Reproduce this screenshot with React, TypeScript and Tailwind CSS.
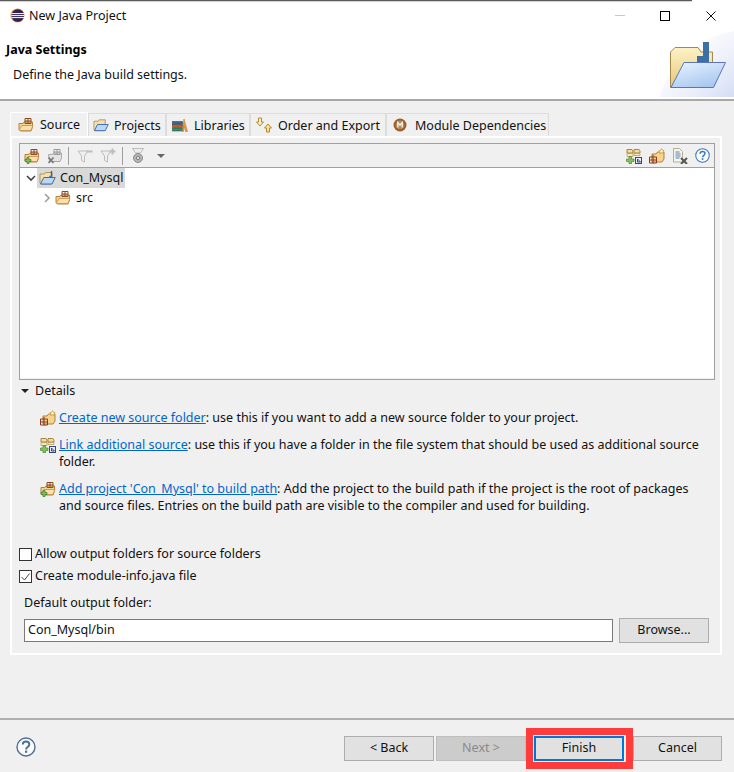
import type { ReactNode } from "react";

const FONT = "font-['Noto_Sans','Noto_Sans_CJK_SC',sans-serif]";

function EclipseLogo() {
  return (
    <svg width="15" height="15" viewBox="0 0 15 15">
      <circle cx="7.5" cy="7.5" r="7" fill="#f7941e" />
      <circle cx="7.8" cy="7.5" r="6.3" fill="#2c2255" />
      <path d="M1.5 5.6h12.6M1.2 7.6h13.2M1.6 9.6h12.4" stroke="#fff" strokeWidth="1" />
    </svg>
  );
}

function PackageFolder({ badge }: { badge?: ReactNode }) {
  return (
    <svg width="16" height="16" viewBox="0 0 16 16">
      <path d="M1 6.5h4l1-1.5h8.5v5L13 14H2.5L1 12.5z" fill="#f6d38e" stroke="#b5803a" strokeWidth="1" />
      <path d="M1.2 13L4 8.5h11L12.8 13.5H2z" fill="#f9e0ac" stroke="#c08f4a" strokeWidth="0.8" />
      <path d="M7 1.5h6v5H7zM10 1.500v5M7 4h6" fill="none" stroke="#8a4b23" strokeWidth="1" />
      {badge}
    </svg>
  );
}

function PlusBadge() {
  return <path d="M3 9.5h2v2h2v2H5v2H3v-2H1v-2h2z" fill="#7fc25b" stroke="#3d7a2b" strokeWidth="0.7" />;
}

function RemoveSourceIcon() {
  return (
    <svg width="16" height="16" viewBox="0 0 16 16">
      <path d="M1.5 6.5h4l1-1.5h8v5L13 13.5H2.5z" fill="#e4e4e4" stroke="#a8a8a8" strokeWidth="1" />
      <path d="M7 1.5h6v5H7zM10 1.500v5M7 4h6" fill="none" stroke="#9a9a9a" strokeWidth="1" />
      <path d="M1.5 9.5l5 5.5M6.5 9.5l-5 5.5" stroke="#7a7a7a" strokeWidth="1.8" />
    </svg>
  );
}

function FilterIcon({ plus }: { plus?: boolean }) {
  return (
    <svg width="16" height="16" viewBox="0 0 16 16">
      <path d="M1 3h10L7.5 8v6l-3-1.500V8z" fill="#efefef" stroke="#bdbdbd" strokeWidth="1" />
      {plus ? (
        <path d="M12.5 0.5v6M9.5 3.5h6" stroke="#bdbdbd" strokeWidth="2" />
      ) : (
        <path d="M9.5 3.5h6" stroke="#bdbdbd" strokeWidth="2" />
      )}
    </svg>
  );
}

function ViewFilterIcon() {
  return (
    <svg width="16" height="17" viewBox="0 0 16 17">
      <path d="M1.5 1.500h11L9.5 6H4.500z" fill="#ededed" stroke="#bcbcbd" strokeWidth="1" />
      <circle cx="7" cy="11" r="4.5" fill="#b4b4b4" stroke="#8c8c8c" strokeWidth="1" />
      <circle cx="7" cy="11" r="1.6" fill="#efefef" stroke="#7c7c7c" strokeWidth="1" />
    </svg>
  );
}

function LinkSourceIcon() {
  return (
    <svg width="16" height="16" viewBox="0 0 16 16">
      <path d="M1 1.500h5l1 1.500v2H1zM8 1.500h5l1 1.500v2H8z" fill="#f3dca4" stroke="#a8853e" strokeWidth="1" />
      <path d="M1 5.500h6v3H1zM8 5.500h6v2H8z" fill="#f8e8c0" stroke="#a8853e" strokeWidth="0.6" />
      <path d="M3 8.500h2.500v2.500H8v2.500H5.500V16H3v-2.500H.5V11H3z" fill="#83c25c" stroke="#3f7c2d" strokeWidth="0.6" />
      <rect x="9.5" y="9.5" width="6" height="6" fill="#e9edf5" stroke="#33497a" />
      <path d="M11.5 11v3h3M11.5 11l3 3" stroke="#33497a" strokeWidth="1" fill="none" />
    </svg>
  );
}

function NewFolderIcon() {
  return (
    <svg width="16" height="16" viewBox="0 0 16 16">
      <path d="M3 6h4l1.500-2H15v7l-2 3H3z" fill="#f6d38e" stroke="#b5803a" strokeWidth="1" />
      <path d="M12.500 0.500l.8 1.800 1.900.3-1.400 1.300.4 1.900-1.700-1-1.700 1 .4-1.900-1.400-1.300 1.900-.3z" fill="#fff4c4" stroke="#c49a45" strokeWidth="0.7" />
      <path d="M.5 9h7v6h-7zM4 7v8.500M.5 12h7" fill="none" stroke="#8a3b1f" strokeWidth="1" />
    </svg>
  );
}

function RemoveEntryIcon() {
  return (
    <svg width="16" height="16" viewBox="0 0 16 16">
      <path d="M1.500.5h6l3 3V14h-9z" fill="#f4f4ee" stroke="#b4ae90" />
      <path d="M3.500 4h4M3.500 6h5M3.500 8h5M3.500 10h4" stroke="#5c7fb5" />
      <path d="M9 10l6 6M15 10l-6 6" stroke="#565656" strokeWidth="2" />
    </svg>
  );
}

function HelpIcon({ size, color }: { size: number; color: string }) {
  return (
    <svg width={size} height={size} viewBox="0 0 20 20">
      <circle cx="10" cy="10" r="9" fill="#fbfbfb" stroke={color} strokeWidth="1.4" />
      <path d="M6.800 7.600C6.800 5.600 8.300 4.600 10 4.600c1.900 0 3.300 1.100 3.300 2.800 0 2.600-3.200 2.500-3.200 5" fill="none" stroke={color} strokeWidth="2" />
      <rect x="9" y="13.600" width="2.200" height="2.200" fill={color} />
    </svg>
  );
}

function OpenFolderIcon({ jar }: { jar?: boolean }) {
  return (
    <svg width="17" height="16" viewBox="0 0 17 16">
      <path d="M1 4h4.500l1-1.500H13V12l-1 2H2L1 13z" fill="#f7e0a8" stroke="#a58e58" strokeWidth="0.9" />
      <path d="M1.500 14L4.800 7.500h11.400L13 14z" fill="#bcd7f4" stroke="#3e68b0" strokeWidth="1" />
      {jar && <path d="M12.500 1v5l-2 1" fill="none" stroke="#2c6aa8" strokeWidth="1.4" />}
    </svg>
  );
}

function LibrariesIcon() {
  return (
    <svg width="16" height="16" viewBox="0 0 16 16">
      <rect x="0.5" y="11" width="10" height="3" fill="#3f8a6e" stroke="#2b5d4d" strokeWidth="0.6" />
      <rect x="0.5" y="7.5" width="10" height="3" fill="#c45a2c" stroke="#7d3a1d" strokeWidth="0.6" />
      <rect x="0.5" y="4.5" width="10" height="2.6" fill="#2e6d96" stroke="#224f6d" strokeWidth="0.6" />
      <path d="M10.500 14.500L12 2l3.500 12.500h-2L12 8.500l-.5 6z" fill="#eba041" stroke="#b06f22" strokeWidth="0.5" />
    </svg>
  );
}

function OrderIcon() {
  return (
    <svg width="16" height="16" viewBox="0 0 16 16">
      <path d="M2.500 1h3v4H7.500L4 9 .5 5h2z" fill="#fbefc0" stroke="#b28a32" strokeWidth="1" />
      <path d="M10.500 15h3v-4h2L12 7l-3.500 4h2z" fill="#fbe08e" stroke="#b28a32" strokeWidth="1" />
    </svg>
  );
}

function ModuleIcon() {
  return (
    <svg width="14" height="14" viewBox="0 0 14 14">
      <circle cx="7" cy="7" r="6.5" fill="#9a5f2c" />
      <circle cx="7" cy="7" r="4.4" fill="#b98a5c" />
      <path d="M4.800 9.500v-5l2.200 2.600 2.200-2.600v5" fill="none" stroke="#fff" strokeWidth="1.2" />
    </svg>
  );
}

// Wizard banner picture in the top right of the header
function BannerFolder() {
  return (
    <svg width="74" height="68" viewBox="0 0 74 68" className="block">
      <defs>
        <linearGradient id="sheet" x1="0" y1="0" x2="1" y2="1">
          <stop offset="0" stopColor="#fff" stopOpacity="0" />
          <stop offset="1" stopColor="#d3dcf5" />
        </linearGradient>
        <linearGradient id="manila" x1="0" y1="0" x2="0" y2="1">
          <stop offset="0" stopColor="#fdf2c6" />
          <stop offset="1" stopColor="#e6c778" />
        </linearGradient>
        <linearGradient id="front" x1="0" y1="0" x2="0.6" y2="1">
          <stop offset="0" stopColor="#eaf4ff" />
          <stop offset="1" stopColor="#a9c8f0" />
        </linearGradient>
      </defs>
      <path d="M0 68C8 34 40 8 74 2V68z" fill="url(#sheet)" />
      <path d="M10.500 23L15 18.500H38L41 23H52.500V58.500H10.500z" fill="url(#manila)" stroke="#a4894e" />
      <path d="M43 13h6v20H37v-6h6z" fill="#3c6fa6" />
      <path d="M11 58.500L24 33.500H65.500L53.500 58.500z" fill="url(#front)" stroke="#5c74bc" strokeWidth="1" />
    </svg>
  );
}

function Tab({ icon, label, className }: { icon: ReactNode; label: string; className: string }) {
  return (
    <div className={`flex h-[23px] items-center border border-b-0 border-[#dcdcdc] pt-[2px] ${className}`}>
      <span className="-mt-[2px] flex w-[16px] justify-center">{icon}</span>
      <span className="whitespace-nowrap">{label}</span>
    </div>
  );
}

function DetailRow({ icon, link, first, rest }: { icon: ReactNode; link: string; first: string; rest?: string }) {
  return (
    <div className="flex gap-[3px] pl-[21px] leading-[17px]">
      <span className="mt-[1px] w-[16px] shrink-0">{icon}</span>
      <p className="whitespace-nowrap">
        <span className="text-[#0066cc] underline">{link}</span>
        {first}
        {rest && <br />}
        {rest}
      </p>
    </div>
  );
}

function WizardButton({ label, disabled, focused, narrow }: { label: string; disabled?: boolean; focused?: boolean; narrow?: boolean }) {
  let look = "border border-[#adadad] bg-[#e1e1e1] text-[#111]";
  if (disabled) look = "border border-[#bfbfbf] bg-[#cccccc] text-[#8a8a8a]";
  if (focused) look = "border-2 border-[#0078d7] bg-[#e1e1e1] text-[#111]";
  return (
    <div className={`flex h-[25px] items-center justify-center ${narrow ? "w-[89px]" : "w-[90px]"} ${look}`}>
      {label}
    </div>
  );
}

export default function App() {
  return (
    <div className={`flex h-[772px] w-[734px] flex-col overflow-hidden bg-[#f0f0f0] text-[12.5px] text-[#111] ${FONT}`}>
      {/* title bar */}
      <div className="h-[30px] bg-white">
        <div className="h-[1px] w-[692px] bg-[#5a5a5a] shadow-[0_1px_1px_#cccccc]" />
        <div className="flex h-[29px] items-center pl-[10px]">
          <EclipseLogo />
          <span className="ml-[4px] pt-[2px]">New Java Project</span>
          <div className="ml-auto flex items-center">
            <div className="h-[1px] w-[10px] bg-[#c8c8c8]" />
            <div className="ml-[35px] h-[10px] w-[10px] border border-black" />
            <svg width="10" height="10" viewBox="0 0 10 10" className="ml-[36px] mr-[18px]">
              <path d="M.5.5l9 9M9.500.5l-9 9" stroke="#111" />
            </svg>
          </div>
        </div>
      </div>

      {/* wizard header */}
      <div className="flex h-[71px] justify-between border-b-2 border-[#a8a8a8] bg-white">
        <div className="pl-[6px] pt-[11px]">
          <h1 className="font-bold leading-[18px] text-black">Java Settings</h1>
          <p className="ml-[7px] mt-[7px] leading-[18px]">Define the Java build settings.</p>
        </div>
        <div className="mb-[2px] self-end">
          <BannerFolder />
        </div>
      </div>

      {/* tab folder */}
      <div className="flex h-[617px] flex-col px-[10px] pt-[11px]">
        <div className="flex items-end">
          <div className="z-10 -mb-[1px] flex h-[25px] w-[78px] items-center gap-[6px] border border-b-0 border-white pl-[7px]">
            <PackageFolder />
            <span>Source</span>
          </div>
          <Tab icon={<OpenFolderIcon />} label="Projects" className="w-[78px] gap-[5px] pl-[4px]" />
          <Tab icon={<LibrariesIcon />} label="Libraries" className="w-[84px] gap-[6px] pl-[5px]" />
          <Tab icon={<OrderIcon />} label="Order and Export" className="w-[136px] gap-[6px] pl-[5px]" />
          <Tab icon={<ModuleIcon />} label="Module Dependencies" className="w-[163px] gap-[7px] pl-[5px]" />
        </div>

        <div className="h-[519px] w-[712px] border-2 border-white pl-[7px] pr-[5px] pt-[5px]">
          {/* toolbar and tree */}
          <div className="h-[237px] w-[696px] border border-[#a0a0a0]">
            <div className="flex h-[24px] items-center border-b border-[#a0a0a0] pl-[4px] pr-[4px]">
              <PackageFolder badge={<PlusBadge />} />
              <span className="ml-[7px]"><RemoveSourceIcon /></span>
              <span className="ml-[5px] h-[18px] w-[1px] bg-[#a0a0a0]" />
              <span className="ml-[8px]"><FilterIcon /></span>
              <span className="ml-[7px]"><FilterIcon plus /></span>
              <span className="ml-[6px] h-[18px] w-[1px] bg-[#a0a0a0]" />
              <span className="ml-[8px]"><ViewFilterIcon /></span>
              <span className="ml-[10px] h-0 w-0 border-x-[4px] border-t-[4px] border-x-transparent border-t-[#666]" />
              <div className="ml-auto flex items-center gap-[7px]">
                <LinkSourceIcon />
                <NewFolderIcon />
                <RemoveEntryIcon />
                <HelpIcon size={15} color="#3b78b5" />
              </div>
            </div>
            <div className="h-[210px] bg-white">
              <div className="flex h-[20px] items-center">
                <svg width="10" height="7" viewBox="0 0 10 7" className="ml-[6px]">
                  <path d="M1 1l4 4 4-4" fill="none" stroke="#444" strokeWidth="1.6" />
                </svg>
                <div className="ml-[1px] flex h-[20px] w-[88px] items-center gap-[4px] bg-[#d9d9d9] pl-[2px]">
                  <OpenFolderIcon jar />
                  <span>Con_Mysql</span>
                </div>
              </div>
              <div className="flex h-[20px] items-center pl-[24px]">
                <svg width="7" height="10" viewBox="0 0 7 10">
                  <path d="M1 1l4 4-4 4" fill="none" stroke="#a0a0a0" strokeWidth="1.6" />
                </svg>
                <span className="ml-[4px]"><PackageFolder /></span>
                <span className="ml-[5px]">src</span>
              </div>
            </div>
          </div>

          {/* details section */}
          <div className="mt-[2px] flex h-[18px] items-center">
            <span className="ml-[2px] h-0 w-0 border-x-[4px] border-t-[4px] border-x-transparent border-t-[#222]" />
            <span className="ml-[6px]">Details</span>
          </div>
          <div className="mt-[9px] flex flex-col gap-[10px]">
            <DetailRow
              icon={<NewFolderIcon />}
              link="Create new source folder"
              first=": use this if you want to add a new source folder to your project."
            />
            <DetailRow
              icon={<LinkSourceIcon />}
              link="Link additional source"
              first=": use this if you have a folder in the file system that should be used as additional source"
              rest="folder."
            />
            <DetailRow
              icon={<PackageFolder badge={<PlusBadge />} />}
              link="Add project 'Con_Mysql' to build path"
              first=": Add the project to the build path if the project is the root of packages"
              rest="and source files. Entries on the build path are visible to the compiler and used for building."
            />
          </div>

          {/* output options */}
          <div className="mt-[34px] flex flex-col gap-[9px]">
            <label className="flex h-[13px] items-center gap-[3px]">
              <span className="h-[13px] w-[13px] border border-[#333] bg-white" />
              Allow output folders for source folders
            </label>
            <label className="flex h-[13px] items-center gap-[3px]">
              <span className="flex h-[13px] w-[13px] items-center justify-center border border-[#333] bg-white">
                <svg width="9" height="8" viewBox="0 0 9 8">
                  <path d="M.5 4l3 3 5-6.500" fill="none" stroke="#444" />
                </svg>
              </span>
              Create module-info.java file
            </label>
          </div>
          <div className="ml-[5px] mt-[11px] leading-[18px]">Default output folder:</div>
          <div className="ml-[5px] mt-[6px] flex items-center">
            <div className="flex h-[23px] w-[589px] items-center border border-[#7a7a7a] bg-white pl-[3px]">
              Con_Mysql/bin
            </div>
            <div className="ml-[6px] flex h-[25px] w-[90px] items-center justify-center border border-[#adadad] bg-[#e1e1e1]">
              Browse...
            </div>
          </div>
        </div>
      </div>

      {/* button bar */}
      <div className="flex h-[54px] items-start border-t-2 border-[#b0b0b0] pt-[16px]">
        <span className="ml-[16px] mt-[1px]"><HelpIcon size={20} color="#4f6f96" /></span>
        <div className="ml-auto mr-[12px] flex">
          <WizardButton label="< Back" />
          <span className="ml-[2px]"><WizardButton label="Next >" disabled /></span>
          <div className="relative ml-[8px]">
            <WizardButton label="Finish" focused />
            {/* red highlight drawn round the Finish button */}
            <div className="absolute -bottom-[8px] -left-[8px] -right-[9px] -top-[8px] border-[7px] border-[#ff3b3b]" />
          </div>
          <span className="ml-[9px]"><WizardButton label="Cancel" narrow /></span>
        </div>
      </div>
    </div>
  );
}
